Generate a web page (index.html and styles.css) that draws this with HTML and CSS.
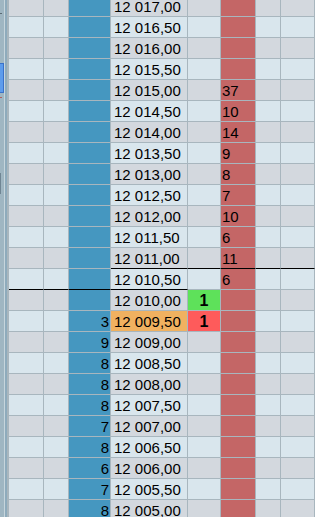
FILE: index.html
```html
<!DOCTYPE html>
<html>
<head>
<meta charset="utf-8">
<link rel="stylesheet" href="styles.css">
</head>
<body>
<div class="frame">
  <div class="tick t1"></div>
  <div class="tab"></div>
  <div class="tick t2"></div>
  <div class="bar"></div>
</div>
<div class="ladder">
  <div class="row even"><div class="c"></div><div class="c"></div><div class="c bid"></div><div class="c px">12 017,00</div><div class="c"></div><div class="c ask"></div><div class="c"></div><div class="c"></div></div>
  <div class="row odd"><div class="c"></div><div class="c"></div><div class="c bid"></div><div class="c px">12 016,50</div><div class="c"></div><div class="c ask"></div><div class="c"></div><div class="c"></div></div>
  <div class="row even"><div class="c"></div><div class="c"></div><div class="c bid"></div><div class="c px">12 016,00</div><div class="c"></div><div class="c ask"></div><div class="c"></div><div class="c"></div></div>
  <div class="row odd"><div class="c"></div><div class="c"></div><div class="c bid"></div><div class="c px">12 015,50</div><div class="c"></div><div class="c ask"></div><div class="c"></div><div class="c"></div></div>
  <div class="row even"><div class="c"></div><div class="c"></div><div class="c bid"></div><div class="c px">12 015,00</div><div class="c"></div><div class="c ask">37</div><div class="c"></div><div class="c"></div></div>
  <div class="row odd"><div class="c"></div><div class="c"></div><div class="c bid"></div><div class="c px">12 014,50</div><div class="c"></div><div class="c ask">10</div><div class="c"></div><div class="c"></div></div>
  <div class="row even"><div class="c"></div><div class="c"></div><div class="c bid"></div><div class="c px">12 014,00</div><div class="c"></div><div class="c ask">14</div><div class="c"></div><div class="c"></div></div>
  <div class="row odd"><div class="c"></div><div class="c"></div><div class="c bid"></div><div class="c px">12 013,50</div><div class="c"></div><div class="c ask">9</div><div class="c"></div><div class="c"></div></div>
  <div class="row even"><div class="c"></div><div class="c"></div><div class="c bid"></div><div class="c px">12 013,00</div><div class="c"></div><div class="c ask">8</div><div class="c"></div><div class="c"></div></div>
  <div class="row odd"><div class="c"></div><div class="c"></div><div class="c bid"></div><div class="c px">12 012,50</div><div class="c"></div><div class="c ask">7</div><div class="c"></div><div class="c"></div></div>
  <div class="row even"><div class="c"></div><div class="c"></div><div class="c bid"></div><div class="c px">12 012,00</div><div class="c"></div><div class="c ask">10</div><div class="c"></div><div class="c"></div></div>
  <div class="row odd"><div class="c"></div><div class="c"></div><div class="c bid"></div><div class="c px">12 011,50</div><div class="c"></div><div class="c ask">6</div><div class="c"></div><div class="c"></div></div>
  <div class="row even best-ask-above"><div class="c"></div><div class="c"></div><div class="c bid"></div><div class="c px">12 011,00</div><div class="c"></div><div class="c ask">11</div><div class="c"></div><div class="c"></div></div>
  <div class="row odd best-bid-above"><div class="c"></div><div class="c"></div><div class="c bid"></div><div class="c px">12 010,50</div><div class="c"></div><div class="c ask">6</div><div class="c"></div><div class="c"></div></div>
  <div class="row even"><div class="c"></div><div class="c"></div><div class="c bid"></div><div class="c px">12 010,00</div><div class="c buy">1</div><div class="c ask"></div><div class="c"></div><div class="c"></div></div>
  <div class="row odd"><div class="c"></div><div class="c"></div><div class="c bid">3</div><div class="c px last">12 009,50</div><div class="c sell">1</div><div class="c ask"></div><div class="c"></div><div class="c"></div></div>
  <div class="row even"><div class="c"></div><div class="c"></div><div class="c bid">9</div><div class="c px">12 009,00</div><div class="c"></div><div class="c ask"></div><div class="c"></div><div class="c"></div></div>
  <div class="row odd"><div class="c"></div><div class="c"></div><div class="c bid">8</div><div class="c px">12 008,50</div><div class="c"></div><div class="c ask"></div><div class="c"></div><div class="c"></div></div>
  <div class="row even"><div class="c"></div><div class="c"></div><div class="c bid">8</div><div class="c px">12 008,00</div><div class="c"></div><div class="c ask"></div><div class="c"></div><div class="c"></div></div>
  <div class="row odd"><div class="c"></div><div class="c"></div><div class="c bid">8</div><div class="c px">12 007,50</div><div class="c"></div><div class="c ask"></div><div class="c"></div><div class="c"></div></div>
  <div class="row even"><div class="c"></div><div class="c"></div><div class="c bid">7</div><div class="c px">12 007,00</div><div class="c"></div><div class="c ask"></div><div class="c"></div><div class="c"></div></div>
  <div class="row odd"><div class="c"></div><div class="c"></div><div class="c bid">8</div><div class="c px">12 006,50</div><div class="c"></div><div class="c ask"></div><div class="c"></div><div class="c"></div></div>
  <div class="row even"><div class="c"></div><div class="c"></div><div class="c bid">6</div><div class="c px">12 006,00</div><div class="c"></div><div class="c ask"></div><div class="c"></div><div class="c"></div></div>
  <div class="row odd"><div class="c"></div><div class="c"></div><div class="c bid">7</div><div class="c px">12 005,50</div><div class="c"></div><div class="c ask"></div><div class="c"></div><div class="c"></div></div>
  <div class="row even"><div class="c"></div><div class="c"></div><div class="c bid">8</div><div class="c px">12 005,00</div><div class="c"></div><div class="c ask"></div><div class="c"></div><div class="c"></div></div>
</div>
</body>
</html>
```
FILE: styles.css
```css
html, body {
  margin: 0;
  padding: 0;
  height: 100%;
  overflow: hidden;
}
body {
  display: flex;
  align-items: flex-start;
  background: #d9e6ed;
  font-family: "Liberation Sans", Arial, sans-serif;
  font-size: 15px;
  color: #000;
}
.frame {
  flex: 0 0 8px;
  height: 100%;
  display: flex;
  flex-direction: column;
  background: linear-gradient(to right, #9fb6c2 0, #9fb6c2 4px, #c6d5dc 4px, #c6d5dc 5px, #8eabbc 5px, #8eabbc 7px, #a9b6bd 7px, #a9b6bd 8px);
}
.tick {
  width: 2px;
  height: 1px;
  background: #5a6a74;
}
.t1 { margin-top: 13px; }
.tab {
  margin-top: 49px;
  width: 4px;
  height: 30px;
  box-sizing: border-box;
  background: #5d9cec;
  border: 1px solid #3b72c9;
  border-left: 0;
}
.t2 {
  margin-top: 4px;
  background: #b06060;
}
.bar {
  margin-top: 75px;
  width: 1px;
  height: 21px;
  background: #6f8593;
}
.ladder {
  flex: 1;
  margin-top: -4px;
  border-left: 1px solid #a8b6be;
}
.row {
  display: grid;
  grid-template-columns: 35px 25px 42px 77px 33px 35px 25px 1fr;
}
.c {
  box-sizing: border-box;
  height: 21px;
  padding-top: 2px;
  line-height: 18px;
  border-right: 1px solid #a8b6be;
  border-bottom: 1px solid #a8b6be;
  white-space: nowrap;
  overflow: hidden;
}
.even .c { background: #d3d8de; }
.odd .c { background: #d9e6ed; }
.row .bid {
  background: #4597c0;
  text-align: right;
  padding-right: 1px;
}
.row .px { padding-left: 3px; }
.row .ask {
  background: #c46666;
  padding-left: 1px;
}
.row .last { background: #f0b160; }
.row .buy {
  background: #5ee15a;
  text-align: center;
  font-weight: bold;
  font-size: 16px;
}
.row .sell {
  background: #fe5b5b;
  text-align: center;
  font-weight: bold;
  font-size: 16px;
}
.best-ask-above .px,
.best-ask-above .c:nth-child(n+4) {
  border-bottom-color: #000;
}
.best-bid-above .c:nth-child(-n+4) {
  border-bottom-color: #000;
}
```
